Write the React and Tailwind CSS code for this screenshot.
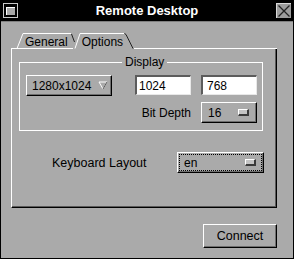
import React from 'react';

const raised = "border-t border-l border-t-white border-l-white border-b border-r border-b-black border-r-black shadow-[inset_-1px_-1px_0_#6e6e6e]";
const sunken = "border-t-2 border-l-2 border-t-[#5c5c5c] border-l-[#5c5c5c] border-b border-r border-b-[#e8e8e8] border-r-[#e8e8e8] bg-white";

const Indicator = () => (
  <div className="w-[11px] h-[7px] bg-[#c4c4c4] border-t border-l border-t-white border-l-white border-b-2 border-r-2 border-b-[#3a3a3a] border-r-[#3a3a3a]" />
);

const OptionMenu = ({ value, focused, className }) => (
  <div className={`${raised} ${className} bg-[#aaaaaa] p-[1px] flex`}>
    <div className={`flex-1 flex items-center justify-between pl-[4px] pr-[5px] ${focused ? "border border-dotted border-black" : "border border-transparent"}`}>
      <span>{value}</span>
      <Indicator />
    </div>
  </div>
);

export default function App() {
  return (
    <div className="w-[294px] h-[259px] bg-[#aaaaaa] border-x border-b border-black flex flex-col text-[12px] leading-[14px] text-black font-['Liberation_Sans',Arial,sans-serif]">
      {/* title bar */}
      <div className="h-[21px] bg-black flex items-center justify-between px-[2px] shrink-0">
        <div className="w-[15px] h-[15px] border border-[#c8c8c8] flex items-center justify-center">
          <div className="w-[9px] h-[8px] bg-[#a8a8a8] border-t border-l border-white" />
        </div>
        <span className="text-white font-bold text-[13px]">Remote Desktop</span>
        <div className="w-[15px] h-[15px] bg-[#9c9c9c] border-t border-l border-[#d8d8d8]">
          <svg width="14" height="14" viewBox="0 0 14 14">
            <path d="M1.5 1.5 L12.5 12.5 M12.5 1.5 L1.5 12.5" stroke="#222" strokeWidth="1.3" />
          </svg>
        </div>
      </div>
      <div className="h-[1px] bg-[#808080] shrink-0" />

      {/* body */}
      <div className="flex-1 pt-[11px] pl-[10px] pr-[16px] flex flex-col">
        {/* tabs */}
        <div className="relative h-[16px] flex items-start pt-[2px] pl-[14px]">
          <svg className="absolute left-0 top-0" width="266" height="16" viewBox="0 0 266 16" fill="none">
            <polyline points="0,15.5 62,15.5" stroke="#fff" />
            <polyline points="6,15.5 12,0.5 60,0.5" stroke="#fff" />
            <polyline points="60.5,1 63.5,9" stroke="#222" />
            <polyline points="64,15.5 69,0.5 113,0.5" stroke="#fff" />
            <polyline points="113.5,0.5 115,1.5 122,15.5" stroke="#222" />
            <polyline points="123,15.5 266,15.5" stroke="#fff" />
            <polyline points="0.5,15 0.5,16" stroke="#fff" />
          </svg>
          <span className="relative">General</span>
          <span className="relative ml-[14px]">Options</span>
        </div>

        {/* panel */}
        <div className="h-[159px] w-[266px] border-l border-l-white border-r border-b border-r-black border-b-black shadow-[inset_-1px_-1px_0_#5a5a5a] pt-[13px] pl-[7px] flex flex-col">
          <div className="relative w-[244px] h-[69px] border border-white pt-[12px] pl-[6px] pr-[5px]">
            <span className="absolute -top-[8px] left-[102px] px-[3px] bg-[#aaaaaa]">Display</span>
            <div className="flex items-start">
              <div className={`${raised} w-[86px] h-[21px] flex items-center justify-between pl-[5px] pr-[3px]`}>
                <span>1280x1024</span>
                <svg width="10" height="9" viewBox="0 0 10 9">
                  <polygon points="1,1 9,1 5,8" fill="#aaaaaa" stroke="#fff" />
                  <polyline points="9,1 5,8" stroke="#555" />
                </svg>
              </div>
              <div className={`${sunken} ml-[23px] w-[56px] h-[20px] flex items-center pl-[2px]`}>1024</div>
              <div className={`${sunken} ml-[10px] w-[56px] h-[20px] flex items-center pl-[4px]`}>768</div>
            </div>
            <div className="flex items-center justify-end mt-[6px]">
              <span>Bit Depth</span>
              <OptionMenu value="16" className="ml-[10px] w-[56px] h-[21px]" />
            </div>
          </div>

          <div className="flex items-center mt-[21px] pl-[33px]">
            <span className="w-[125px] text-[12.5px]">Keyboard Layout</span>
            <OptionMenu value="en" focused className="w-[87px] h-[21px]" />
          </div>
        </div>

        <div className="flex justify-end mt-[16px]">
          <button className={`${raised} w-[74px] h-[24px] bg-[#aaaaaa] text-[12.5px]`}>Connect</button>
        </div>
      </div>
    </div>
  );
}
